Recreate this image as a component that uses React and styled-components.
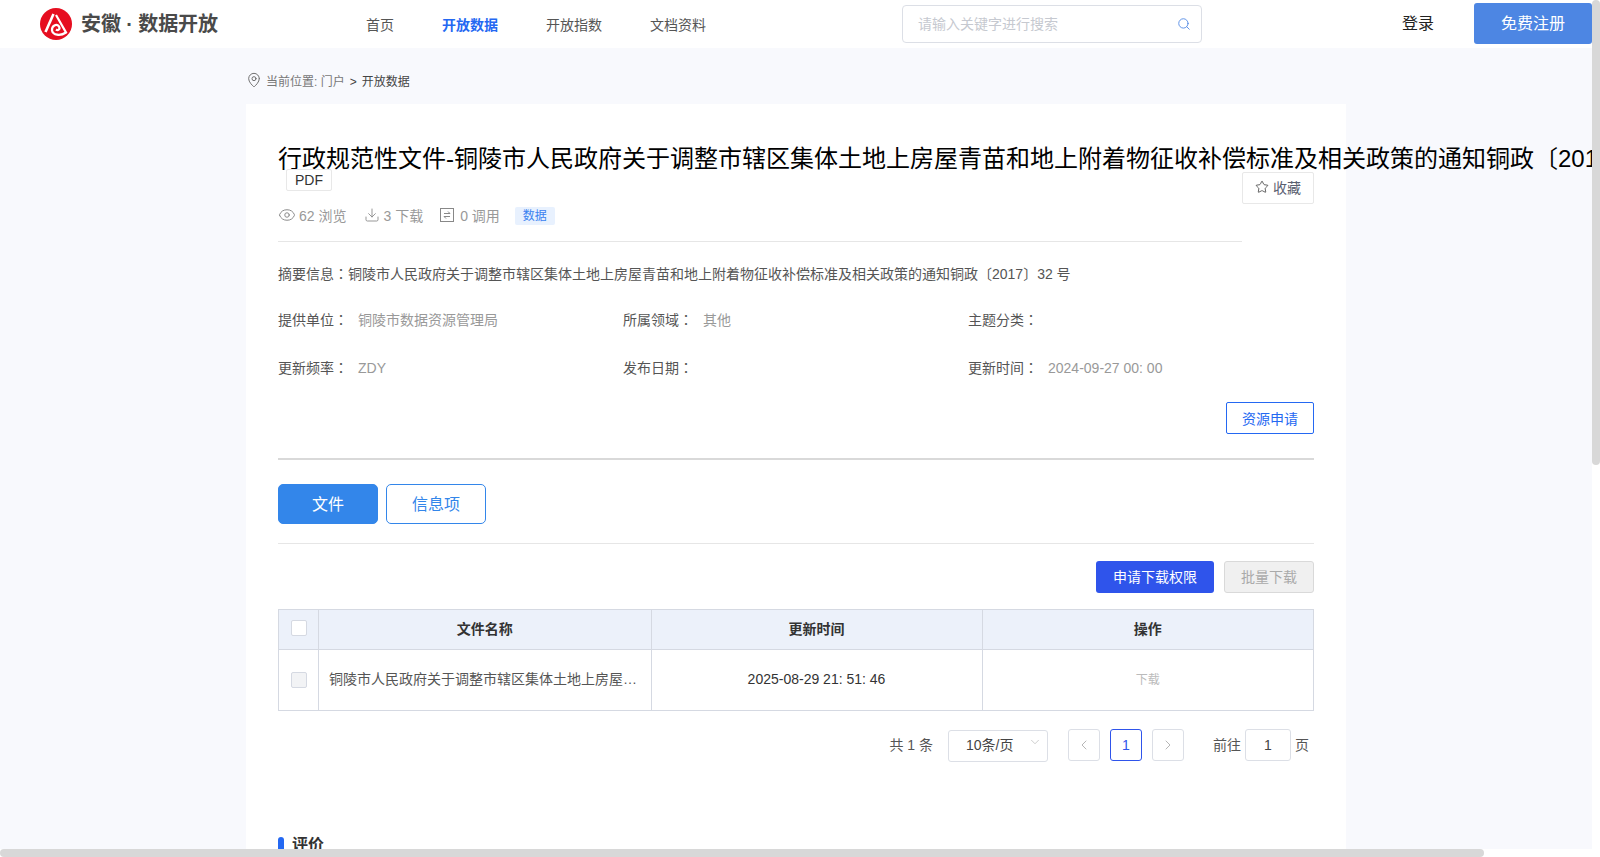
import React from 'react';
import styled, { createGlobalStyle } from 'styled-components';
import { Star, MapPin, Eye, Download, Search, ChevronLeft, ChevronRight, ChevronDown } from 'lucide-react';

const Global = createGlobalStyle`
  html, body { margin: 0; height: 100%; overflow: hidden; }
  body { background: #fff; font-family: "Liberation Sans", "Noto Sans CJK SC", sans-serif; color: #333; }
`;

const Scroller = styled.div`
  width: 100vw;
  height: 100vh;
  overflow: hidden;
  background: #f8f9fd;
`;
const VTrack = styled.div`
  position: fixed;
  top: 0;
  right: 0;
  bottom: 0;
  width: 8px;
  background: #fff;
`;
const VThumb = styled.div`
  height: 465px;
  background: #d8d8d8;
  border-radius: 4px;
`;
const HTrack = styled.div`
  position: fixed;
  left: 0;
  right: 0;
  bottom: 0;
  height: 8px;
  background: #fff;
`;
const HThumb = styled.div`
  width: 1484px;
  height: 8px;
  background: #d8d8d8;
  border-radius: 4px;
`;
const Page = styled.div`
  height: 1550px;
  background: #f8f9fd;
`;
const Header = styled.header`
  height: 48px;
  background: #fff;
  display: flex;
  align-items: center;
  position: relative;
`;
const Brand = styled.div`
  display: flex;
  align-items: center;
  gap: 9px;
  margin-left: 40px;
  width: 326px;
  flex: none;
`;
const BrandName = styled.span`
  font-size: 20px;
  font-weight: 700;
  letter-spacing: -0.1px;
  color: #4a4a4a;
  white-space: pre;
  margin-top: -3px;
`;
const Nav = styled.nav`
  display: flex;
  gap: 48px;
  width: 536px;
  flex: none;
`;
const NavItem = styled.a`
  font-size: 14px;
  color: ${p => (p.$active ? '#2468f2' : '#555')};
  font-weight: ${p => (p.$active ? 700 : 400)};
`;
const SearchBox = styled.div`
  width: 300px;
  height: 38px;
  box-sizing: border-box;
  border: 1px solid #dcdfe6;
  border-radius: 4px;
  display: flex;
  align-items: center;
  justify-content: space-between;
  padding: 0 10px 2px 15px;
  font-size: 14px;
  color: #c6c9d0;
  margin-top: -1px;
`;
const SearchGlyph = styled.span`
  display: flex;
  margin-top: 2px;
`;
const Login = styled.span`
  font-size: 16px;
  color: #222;
  margin-left: 200px;
  margin-top: -5px;
`;
const Register = styled.button`
  width: 118px;
  height: 41px;
  margin-left: 40px;
  border: 0;
  border-radius: 3px;
  background: #4d86e3;
  color: #fff;
  font: inherit;
  font-size: 16px;
  margin-top: -1px;
  padding: 0 0 3px;
`;
const Crumbs = styled.div`
  width: 1100px;
  margin: 0 0 0 246px;
  height: 56px;
  display: flex;
  align-items: center;
  gap: 4px;
  font-size: 12px;
  color: #777;
  white-space: pre;
  padding-top: 8px;
  box-sizing: border-box;
`;
const CrumbSep = styled.span`
  margin: 0 5px;
  color: #444;
`;
const CrumbNow = styled.span`
  color: #444;
`;
const Panel = styled.main`
  width: 1100px;
  margin-left: 246px;
  box-sizing: border-box;
  padding: 45px 32px 0;
  background: #fff;
  min-height: 1400px;
`;
const Title = styled.h1`
  margin: 0;
  font-size: 24px;
  line-height: 20px;
  font-weight: 400;
  color: #000;
  white-space: nowrap;
`;
const HeadRow = styled.div`
  display: flex;
  align-items: flex-start;
`;
const HeadMain = styled.div`
  flex: 1;
  border-bottom: 1px solid #e6e6e6;
  height: 72px;
`;
const Format = styled.span`
  display: inline-flex;
  align-items: center;
  justify-content: center;
  box-sizing: border-box;
  width: 46px;
  height: 22px;
  margin-left: 8px;
  border: 1px solid #e8e8e8;
  border-radius: 2px;
  font-size: 14px;
  color: #333;
`;
const Stats = styled.div`
  display: flex;
  align-items: center;
  margin-top: 14px;
  font-size: 14px;
  color: #999;
`;
const Stat = styled.span`
  display: inline-flex;
  align-items: center;
  gap: ${p => p.$gap || 3}px;
  margin-right: 18px;
`;
const SwapIcon = styled.svg`
  width: 14px;
  height: 14px;
  margin-left: -1px;
`;
const DataTag = styled.span`
  width: 40px;
  height: 18px;
  margin: 2px 0 0 -3px;
  background: #e8f1fe;
  border-radius: 2px;
  color: #3b82f0;
  font-size: 12px;
  line-height: 18px;
  text-align: center;
`;
const Collect = styled.button`
  width: 72px;
  height: 32px;
  margin-top: 3px;
  box-sizing: border-box;
  border: 1px solid #e8e8e8;
  border-radius: 2px;
  background: #fff;
  display: flex;
  align-items: center;
  justify-content: center;
  gap: 4px;
  font: inherit;
  font-size: 14px;
  color: #5a6070;
  padding: 0 0 2px;
`;
const Summary = styled.p`
  margin: 22px 0 0;
  font-size: 14px;
  line-height: 20px;
  color: #555;
`;
const Colon = styled.span`
  font-family: "Noto Sans CJK TC", sans-serif;
  line-height: 0;
`;
const Meta = styled.div`
  display: grid;
  grid-template-columns: repeat(3, 345px);
  row-gap: 28px;
  margin-top: 26px;
  font-size: 14px;
  line-height: 20px;
`;
const MetaItem = styled.div`
  display: flex;
  gap: 10px;
`;
const MetaLabel = styled.span`
  color: #555;
`;
const MetaValue = styled.span`
  color: #999;
`;
const ApplyRow = styled.div`
  display: flex;
  justify-content: flex-end;
  margin-top: 24px;
  padding-bottom: 24px;
  border-bottom: 2px solid #d9d9d9;
`;
const Apply = styled.button`
  width: 88px;
  height: 32px;
  box-sizing: border-box;
  background: #fff;
  border: 1px solid #2468f2;
  border-radius: 2px;
  color: #2468f2;
  font: inherit;
  font-size: 14px;
  padding: 0;
`;
const Tabs = styled.div`
  display: flex;
  gap: 8px;
  padding: 24px 0 19px;
  border-bottom: 1px solid #e6e6e6;
`;
const Tab = styled.button`
  width: 100px;
  height: 40px;
  box-sizing: border-box;
  border-radius: 5px;
  border: 1px solid #3386ea;
  background: ${p => (p.$active ? '#3386ea' : '#fff')};
  color: ${p => (p.$active ? '#fff' : '#3386ea')};
  font: inherit;
  font-size: 16px;
  padding: 0 0 2px;
`;
const Actions = styled.div`
  display: flex;
  justify-content: flex-end;
  gap: 10px;
  margin-top: 17px;
`;
const Primary = styled.button`
  width: 118px;
  height: 32px;
  border: 0;
  border-radius: 3px;
  background: #2f54eb;
  color: #fff;
  font: inherit;
  font-size: 14px;
  padding: 0 0 2px;
`;
const Disabled = styled.button`
  width: 90px;
  height: 32px;
  box-sizing: border-box;
  border: 1px solid #d9d9d9;
  border-radius: 3px;
  background: #f0f0f0;
  color: #aaa;
  font: inherit;
  font-size: 14px;
  padding: 0 0 2px;
`;
const Table = styled.div`
  margin-top: 16px;
  display: grid;
  grid-template-columns: 40px 332.5px 331px 1fr;
  grid-template-rows: 40px 61px;
  border-top: 1px solid #d5d9e2;
  border-left: 1px solid #d5d9e2;
`;
const Cell = styled.div`
  display: flex;
  align-items: center;
  justify-content: center;
  box-sizing: border-box;
  min-width: 0;
  padding-bottom: 3px;
  border-right: 1px solid #d5d9e2;
  border-bottom: 1px solid #d5d9e2;
  font-size: ${p => (p.$small ? '12px' : '14px')};
  color: ${p => (p.$small ? '#bbb' : '#333')};
`;
const HeadCell = styled(Cell)`
  background: #ecf1fa;
  font-weight: 700;
  color: #333;
  padding-bottom: 4px;
`;
const NameCell = styled(Cell)`
  justify-content: flex-start;
  padding: 0 12px 5px 10px;
  color: #555;
`;
const Ellipsis = styled.span`
  white-space: nowrap;
  overflow: hidden;
  text-overflow: ellipsis;
`;
const Box = styled.span`
  width: 14px;
  height: 14px;
  border: 1px solid #d5d9e2;
  border-radius: 2px;
  background: ${p => (p.$off ? '#f2f3f5' : '#fff')};
  margin-top: ${p => (p.$off ? 3 : 0)}px;
`;
const Pager = styled.div`
  display: flex;
  align-items: center;
  justify-content: flex-end;
  margin-top: 17px;
  height: 34px;
  font-size: 14px;
  color: #555;
`;
const Total = styled.span`
  margin: 0 15px 2px 0;
`;
const Select = styled.div`
  width: 100px;
  height: 32px;
  margin-top: 1px;
  box-sizing: border-box;
  border: 1px solid #dcdfe6;
  border-radius: 3px;
  display: flex;
  align-items: center;
  justify-content: space-between;
  padding: 0 5px 4px 17px;
  color: #444;
  margin-right: 20px;
`;
const Chevron = styled.span`
  display: flex;
  margin-top: -3px;
`;
const PageBtn = styled.span`
  width: 32px;
  height: 32px;
  box-sizing: border-box;
  display: flex;
  align-items: center;
  justify-content: center;
  border: 1px solid ${p => (p.$active ? '#2f54eb' : '#dcdfe6')};
  border-radius: 3px;
  color: ${p => (p.$active ? '#2f54eb' : '#aaa')};
  margin-right: 10px;
`;
const Jump = styled.span`
  margin: 0 4px 2px 19px;
`;
const JumpInput = styled.span`
  width: 46px;
  height: 32px;
  box-sizing: border-box;
  border: 1px solid #dcdfe6;
  border-radius: 3px;
  display: flex;
  align-items: center;
  justify-content: center;
  color: #444;
  margin-right: 4px;
`;
const End = styled.span`
  margin: 0 5px 2px 0;
`;
const Section = styled.h2`
  display: flex;
  align-items: center;
  gap: 8px;
  margin: 71px 0 0;
  font-size: 16px;
  line-height: 24px;
  font-weight: 700;
  color: #333;
`;
const SectionMark = styled.i`
  width: 6px;
  height: 16px;
  background: #2468f2;
  border-radius: 3px;
`;

const Logo = () => (
  <svg width="32" height="32" viewBox="0 0 32 32">
    <circle cx="16" cy="16" r="16" fill="#e60e20" />
    <path d="M5.5 24 L13.5 6" fill="none" stroke="#fff" strokeWidth="2.6" />
    <path
      d="M16 7 L26 24.5 C20 28.5 13 27 12 22.5 C11.5 18 16.5 15 19 18.5 C20.5 21 18 23 16 21.5"
      fill="none"
      stroke="#fff"
      strokeWidth="2.2"
    />
  </svg>
);

const App = () => (
  <Scroller>
    <Global />
    <Page>
      <Header>
        <Brand>
          <Logo />
          <BrandName>安徽 · 数据开放</BrandName>
        </Brand>
        <Nav>
          <NavItem>首页</NavItem>
          <NavItem $active>开放数据</NavItem>
          <NavItem>开放指数</NavItem>
          <NavItem>文档资料</NavItem>
        </Nav>
        <SearchBox>
          请输入关键字进行搜索
          <SearchGlyph><Search size={14} color="#4d86e3" strokeWidth={1.5} /></SearchGlyph>
        </SearchBox>
        <Login>登录</Login>
        <Register>免费注册</Register>
      </Header>
      <Crumbs>
        <MapPin size={16} color="#666" strokeWidth={1.4} />
        <span>当前位置: 门户<CrumbSep>&gt;</CrumbSep><CrumbNow>开放数据</CrumbNow></span>
      </Crumbs>
      <Panel>
        <Title>行政规范性文件-铜陵市人民政府关于调整市辖区集体土地上房屋青苗和地上附着物征收补偿标准及相关政策的通知铜政〔2017〕32 号</Title>
        <HeadRow>
          <HeadMain>
            <Format>PDF</Format>
            <Stats>
              <Stat><Eye size={18} strokeWidth={1.3} color="#888" />62 浏览</Stat>
              <Stat><Download size={16} strokeWidth={1.3} color="#888" />3 下载</Stat>
              <Stat $gap={6}>
                <SwapIcon viewBox="0 0 14 14" fill="none" stroke="#888" strokeWidth="1">
                  <rect x="0.5" y="0.5" width="13" height="13" />
                  <path d="M4 5.5h6L8 3.5M10 8.5H4l2 2" />
                </SwapIcon>
                0 调用
              </Stat>
              <DataTag>数据</DataTag>
            </Stats>
          </HeadMain>
          <Collect><Star size={14} strokeWidth={1.3} color="#333" />收藏</Collect>
        </HeadRow>
        <Summary>摘要信息<Colon>：</Colon>铜陵市人民政府关于调整市辖区集体土地上房屋青苗和地上附着物征收补偿标准及相关政策的通知铜政〔2017〕32 号</Summary>
        <Meta>
          <MetaItem><MetaLabel>提供单位<Colon>：</Colon></MetaLabel><MetaValue>铜陵市数据资源管理局</MetaValue></MetaItem>
          <MetaItem><MetaLabel>所属领域<Colon>：</Colon></MetaLabel><MetaValue>其他</MetaValue></MetaItem>
          <MetaItem><MetaLabel>主题分类<Colon>：</Colon></MetaLabel></MetaItem>
          <MetaItem><MetaLabel>更新频率<Colon>：</Colon></MetaLabel><MetaValue>ZDY</MetaValue></MetaItem>
          <MetaItem><MetaLabel>发布日期<Colon>：</Colon></MetaLabel></MetaItem>
          <MetaItem><MetaLabel>更新时间<Colon>：</Colon></MetaLabel><MetaValue>2024-09-27 00: 00</MetaValue></MetaItem>
        </Meta>
        <ApplyRow><Apply>资源申请</Apply></ApplyRow>
        <Tabs>
          <Tab $active>文件</Tab>
          <Tab>信息项</Tab>
        </Tabs>
        <Actions>
          <Primary>申请下载权限</Primary>
          <Disabled>批量下载</Disabled>
        </Actions>
        <Table>
          <HeadCell><Box /></HeadCell>
          <HeadCell>文件名称</HeadCell>
          <HeadCell>更新时间</HeadCell>
          <HeadCell>操作</HeadCell>
          <Cell><Box $off /></Cell>
          <NameCell><Ellipsis>铜陵市人民政府关于调整市辖区集体土地上房屋青苗和地上附着物征收补偿标准及相关政策的通知</Ellipsis></NameCell>
          <Cell>2025-08-29 21: 51: 46</Cell>
          <Cell $small>下载</Cell>
        </Table>
        <Pager>
          <Total>共 1 条</Total>
          <Select>10条/页<Chevron><ChevronDown size={14} strokeWidth={1} color="#aaa" /></Chevron></Select>
          <PageBtn><ChevronLeft size={16} strokeWidth={1.3} /></PageBtn>
          <PageBtn $active>1</PageBtn>
          <PageBtn><ChevronRight size={16} strokeWidth={1.3} /></PageBtn>
          <Jump>前往</Jump>
          <JumpInput>1</JumpInput>
          <End>页</End>
        </Pager>
        <Section><SectionMark />评价</Section>
      </Panel>
    </Page>
    <VTrack><VThumb /></VTrack>
    <HTrack><HThumb /></HTrack>
  </Scroller>
);

export default App;
